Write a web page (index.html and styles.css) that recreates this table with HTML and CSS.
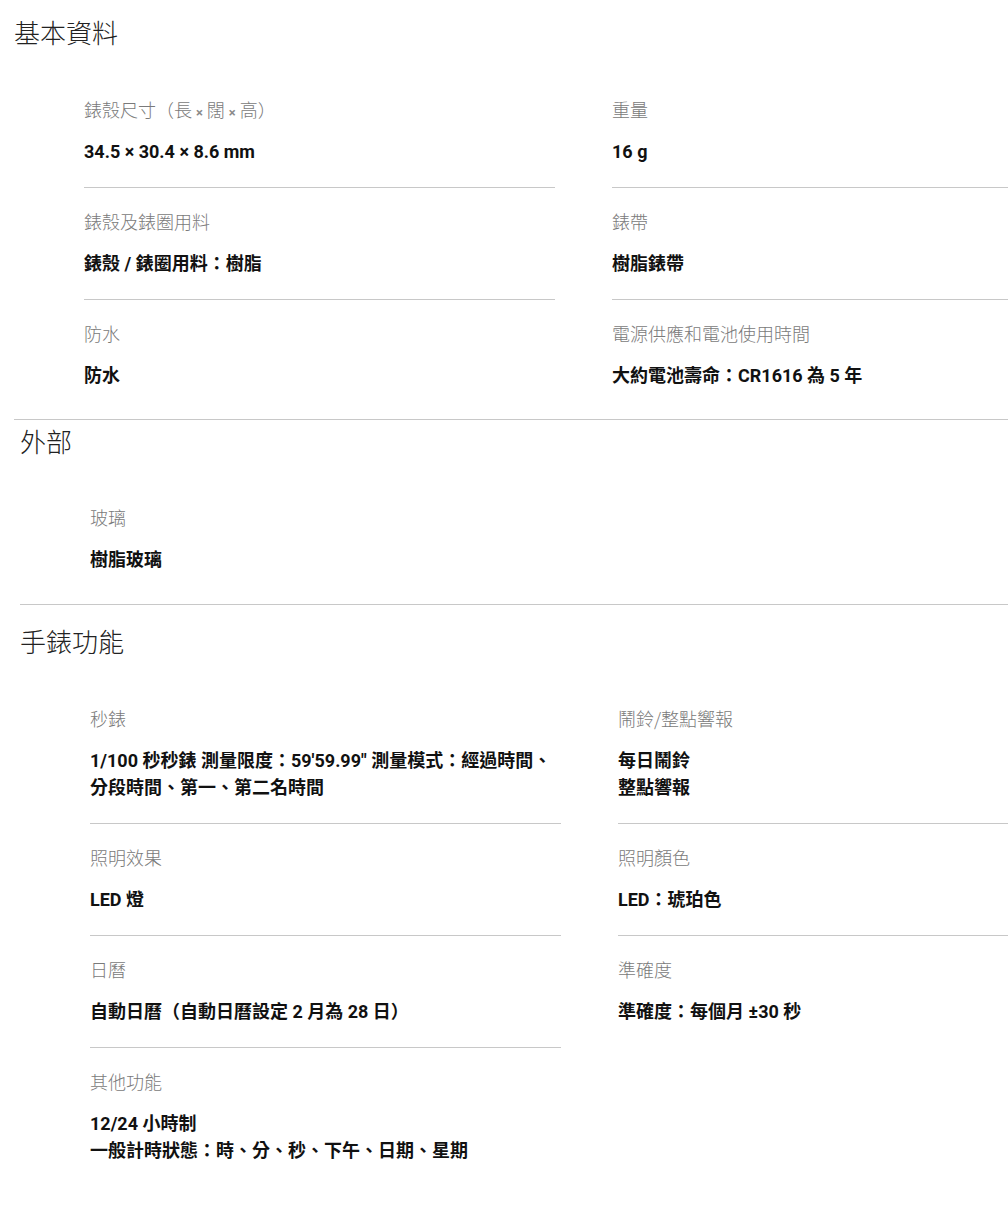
FILE: index.html
```html
<!DOCTYPE html>
<html lang="zh-Hant">
<head>
<meta charset="utf-8">
<title>規格</title>
<link rel="stylesheet" href="styles.css">
</head>
<body>
<div class="page">
  <section class="section s1">
    <h2 class="title">基本資料</h2>
    <div class="grid">
      <div class="item first">
        <div class="label">錶殼尺寸（長 <span class="x">×</span> 闊 <span class="x">×</span> 高）</div>
        <div class="value">34.5 × 30.4 × 8.6 mm</div>
      </div>
      <div class="item first">
        <div class="label">重量</div>
        <div class="value">16 g</div>
      </div>
      <div class="item">
        <div class="label">錶殼及錶圈用料</div>
        <div class="value">錶殼 / 錶圈用料：樹脂</div>
      </div>
      <div class="item">
        <div class="label">錶帶</div>
        <div class="value">樹脂錶帶</div>
      </div>
      <div class="item">
        <div class="label">防水</div>
        <div class="value">防水</div>
      </div>
      <div class="item">
        <div class="label">電源供應和電池使用時間</div>
        <div class="value">大約電池壽命：CR1616 為 5 年</div>
      </div>
    </div>
  </section>
  <section class="section s2">
    <h2 class="title">外部</h2>
    <div class="grid">
      <div class="item first">
        <div class="label">玻璃</div>
        <div class="value">樹脂玻璃</div>
      </div>
    </div>
  </section>
  <section class="section s3">
    <h2 class="title">手錶功能</h2>
    <div class="grid">
      <div class="item first">
        <div class="label">秒錶</div>
        <div class="value">1/100 秒秒錶 測量限度：59'59.99" 測量模式：經過時間、分段時間、第一、第二名時間</div>
      </div>
      <div class="item first">
        <div class="label">鬧鈴/整點響報</div>
        <div class="value">每日鬧鈴<br>整點響報</div>
      </div>
      <div class="item">
        <div class="label">照明效果</div>
        <div class="value">LED 燈</div>
      </div>
      <div class="item">
        <div class="label">照明顏色</div>
        <div class="value">LED：琥珀色</div>
      </div>
      <div class="item">
        <div class="label">日曆</div>
        <div class="value">自動日曆（自動日曆設定 2 月為 28 日）</div>
      </div>
      <div class="item">
        <div class="label">準確度</div>
        <div class="value">準確度：每個月 ±30 秒</div>
      </div>
      <div class="item">
        <div class="label">其他功能</div>
        <div class="value">12/24 小時制<br>一般計時狀態：時、分、秒、下午、日期、星期</div>
      </div>
    </div>
  </section>
</div>
</body>
</html>
```
FILE: styles.css
```css
html, body {
  margin: 0;
  padding: 0;
  background: #ffffff;
  overflow-x: hidden;
}

.page {
  width: 1008px;
  overflow: hidden;
  font-family: "Roboto", "Noto Sans CJK TC", sans-serif;
  color: #111111;
  text-spacing-trim: space-all;
}

.section {
  border-bottom: 1px solid #c8c8c8;
}

.s1 {
  margin-left: 14px;
  padding: 16px 0 8px;
}

.s2 {
  margin-left: 20px;
  padding: 5px 0 9px;
}

.s3 {
  margin-left: 20px;
  padding: 20px 0 0;
  border-bottom: none;
}

.title {
  margin: 0 0 27px;
  font-family: "Noto Sans CJK TC", sans-serif;
  font-size: 26px;
  line-height: 32px;
  font-weight: 300;
  color: #222222;
}

.s2 .title {
  margin-bottom: 26px;
}

.grid {
  display: grid;
  grid-template-columns: 471px 471px;
  column-gap: 57px;
  margin-left: 70px;
}

.item {
  border-top: 1px solid #c8c8c8;
  padding: 20px 0 22px;
}

.item.first {
  border-top-color: transparent;
}

.label {
  height: 26px;
  margin-bottom: 16px;
  font-family: "Noto Sans CJK TC", sans-serif;
  font-size: 18px;
  line-height: 26px;
  font-weight: 300;
  color: #7a7a7a;
}

.label .x {
  font-family: "Roboto", sans-serif;
  font-size: 13px;
  line-height: 1;
  font-weight: 700;
  color: #8a8a8a;
}

.value {
  font-size: 18px;
  line-height: 27px;
  font-weight: 700;
  color: #111111;
}
```
